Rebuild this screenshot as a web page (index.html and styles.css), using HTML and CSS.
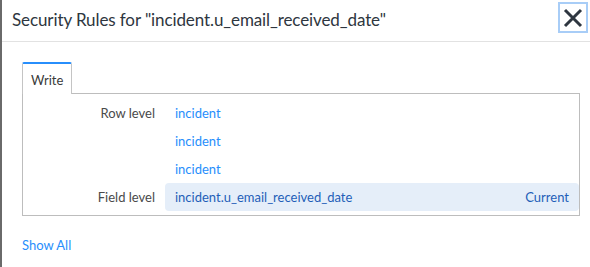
FILE: index.html
```html
<!DOCTYPE html>
<html lang="en">

<head>
    <meta charset="UTF-8">
    <title>Security Rules</title>
    <link rel="stylesheet" href="styles.css">
</head>

<body>
    <div class="modal">

        <!-- header with title and close button -->
        <div class="modal-header">
            <h1 class="modal-title">Security Rules for "incident.u_email_received_date"</h1>
            <button class="close-btn" aria-label="Close">
                <svg width="20" height="20" viewBox="0 0 20 20">
                    <path d="M2 2 L18 18 M18 2 L2 18" stroke="#2e3640" stroke-width="3" fill="none" />
                </svg>
            </button>
        </div>

        <div class="modal-body">
            <!-- tabs -->
            <div class="tabs">
                <div class="tab active">Write</div>
            </div>

            <!-- rules list -->
            <div class="panel">
                <div class="rule-row">
                    <span class="rule-label">Row level</span>
                    <div class="rule-cell"><a href="#">incident</a></div>
                </div>
                <div class="rule-row">
                    <span class="rule-label"></span>
                    <div class="rule-cell"><a href="#">incident</a></div>
                </div>
                <div class="rule-row">
                    <span class="rule-label"></span>
                    <div class="rule-cell"><a href="#">incident</a></div>
                </div>
                <div class="rule-row">
                    <span class="rule-label">Field level</span>
                    <div class="rule-cell current">
                        <a href="#">incident.u_email_received_date</a>
                        <span class="current-tag">Current</span>
                    </div>
                </div>
            </div>

            <a href="#" class="show-all">Show All</a>
        </div>
    </div>
</body>

</html>
```

FILE: styles.css
```css
body {
    margin: 0;
    background: #fff;
    font-family: 'Lato', 'Open Sans', sans-serif;
}

.modal {
    height: 267px;
    border-left: 2px solid #6a6a6a;
    box-sizing: border-box;
}

.modal-header {
    height: 41px;
    display: flex;
    align-items: flex-start;
    justify-content: space-between;
    padding-left: 10px;
    border-bottom: 1px solid #e2e2e2;
}

.modal-title {
    margin: 9px 0 0;
    font-size: 17px;
    font-weight: 400;
    letter-spacing: -0.1px;
    color: #2e3640;
}

.close-btn {
    width: 30px;
    height: 31px;
    margin: 2px 2px 0 0;
    padding: 0;
    background: #fff;
    border: 2px solid #a8cdf7;
    display: flex;
    align-items: center;
    justify-content: center;
}

.modal-body {
    padding: 20px 10px 0 20px;
}

.tabs {
    display: flex;
}

.tab {
    width: 50px;
    height: 32px;
    box-sizing: border-box;
    border: 1px solid #c4c4c4;
    border-top: 2px solid #278efc;
    border-bottom: none;
    border-radius: 2px 2px 0 0;
    font-size: 13px;
    color: #3a3a3a;
    padding: 8px 0 0 8px;
    margin-bottom: -1px;
    background: #fff;
    position: relative;
}

.panel {
    border: 1px solid #bdbdbd;
    padding: 5px 0 4px;
}

.rule-row {
    display: grid;
    grid-template-columns: 142px 1fr;
    height: 28px;
    align-items: center;
}

.rule-label {
    text-align: right;
    padding-right: 10px;
    font-size: 13px;
    color: #4a4a4a;
}

.rule-cell {
    display: flex;
    justify-content: space-between;
    align-items: center;
    height: 28px;
    padding: 0 10px;
    border-radius: 4px;
}

.rule-cell a {
    font-size: 13px;
    color: #278efc;
    text-decoration: none;
}

.rule-cell.current {
    background: #e5eef9;
}

.rule-cell.current a,
.current-tag {
    color: #1f5fb8;
    font-size: 13px;
}

.show-all {
    display: inline-block;
    margin-top: 21px;
    font-size: 13px;
    color: #278efc;
    text-decoration: none;
}
```
